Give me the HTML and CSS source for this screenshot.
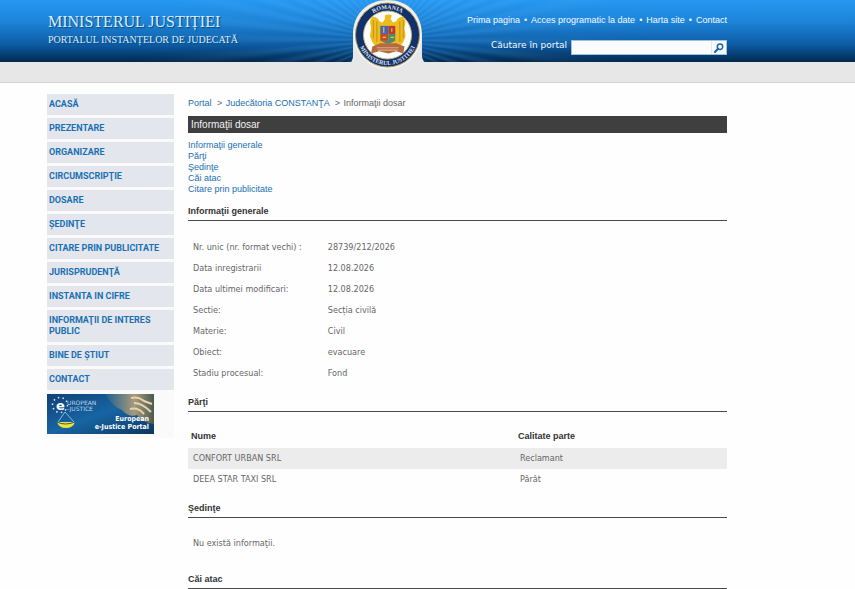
FILE: index.html
```html
<!DOCTYPE html>
<html lang="ro">
<head>
  <meta charset="UTF-8">
  <title>Informaţii dosar</title>
  <link rel="stylesheet" href="styles.css">
</head>
<body>
<header class="header">
  <div class="banner">
    <div class="wrap banner-inner">
      <div class="brand">
        <p class="brand-name">MINISTERUL JUSTIȚIEI</p>
        <p class="brand-sub">PORTALUL INSTANȚELOR DE JUDECATĂ</p>
      </div>
      <div class="tools">
        <nav class="top-links">
          <a href="#">Prima pagina</a><span>•</span><a href="#">Acces programatic la date</a><span>•</span><a href="#">Harta site</a><span>•</span><a href="#">Contact</a>
        </nav>
        <form class="search">
          <label for="search">Căutare în portal</label>
          <div class="search-box">
            <input type="text" id="search">
            <button type="button" aria-label="Caută">
              <svg width="10" height="10" viewBox="0 0 10 10"><circle cx="6" cy="3.7" r="2.7" fill="#fff" stroke="#1b66a8" stroke-width="1.5"/><path d="M4 5.8L1 9" stroke="#1b66a8" stroke-width="2" stroke-linecap="round"/></svg>
            </button>
          </div>
        </form>
      </div>
      <svg class="emblem" width="78" height="72" viewBox="0 0 78 72">
        <path d="M0 64Q4 61 4 56V35C4 13 19 0 38.500 0S73 13 73 35V56Q73 61 78 64V72H0Z" fill="#e7e7e7"/>
        <circle cx="38.500" cy="35" r="34" fill="#f4f4f0"/>
        <circle cx="38.500" cy="35" r="32" fill="#12306b" stroke="#a89a55" stroke-width="1"/>
        <circle cx="38.500" cy="35" r="24" fill="#fdfdfb" stroke="#c5b778" stroke-width="1"/>
        <!-- vultur -->
        <g transform="translate(-5.500 -4) scale(1.150)">
          <path d="M36 17q3-2 6 0l-1 3 2 3 3-1q1-4 6-4l2 4-1 6 1 7-2 5-3 4-4 1-6 4-7-4-4-1-3-4-2-5 1-7-1-6 2-4q5 0 6 4l3 1 2-3z" fill="#edbd1f"/>
          <path d="M26 21v16M29 22v18M49 22v18M52 21v16" stroke="#c99717" stroke-width="1"/>
          <path d="M32 26h7v7h-7z" fill="#4467ac"/>
          <path d="M39 26h6v7h-6z" fill="#b93a35"/>
          <path d="M32 33h7v6h-7z" fill="#c5482d"/>
          <path d="M39 33h6v6l-6 3-7-3h7z" fill="#4c8b6b"/>
          <path d="M35 27v5M42 28v3M34 36h3M41 36h3" stroke="#e8c643" stroke-width="1"/>
          <path d="M25 44l7-3h14l7 3-1 6-6-2-7 2-8-2-7 2z" fill="#b66a43"/>
          <path d="M29 45l19 0M30 47h17" stroke="#e0a77f" stroke-width="1"/>
        </g>
        <path id="arcTop" d="M12.500 35a26 26 0 0 1 52 0" fill="none"/>
        <path id="arcBottom" d="M8.500 35a30 30 0 0 0 60 0" fill="none"/>
        <text class="emblem-text"><textPath href="#arcTop" startOffset="50%" text-anchor="middle">ROMANIA</textPath></text>
        <text class="emblem-text"><textPath href="#arcBottom" startOffset="50%" text-anchor="middle">MINISTERUL JUSTITIEI</textPath></text>
      </svg>
    </div>
  </div>
  <div class="strip"></div>
</header>

<div class="wrap page">
  <aside class="sidebar">
    <ul class="menu">
      <li><a href="#">ACASĂ</a></li>
      <li><a href="#">PREZENTARE</a></li>
      <li><a href="#">ORGANIZARE</a></li>
      <li><a href="#">CIRCUMSCRIPŢIE</a></li>
      <li><a href="#">DOSARE</a></li>
      <li><a href="#">ŞEDINŢE</a></li>
      <li><a href="#">CITARE PRIN PUBLICITATE</a></li>
      <li><a href="#">JURISPRUDENŢĂ</a></li>
      <li><a href="#">INSTANTA IN CIFRE</a></li>
      <li><a href="#">INFORMAŢII DE INTERES PUBLIC</a></li>
      <li><a href="#">BINE DE ŞTIUT</a></li>
      <li><a href="#">CONTACT</a></li>
    </ul>
    <a class="ejustice" href="#">
      <svg width="107" height="40" viewBox="0 0 107 40">
        <defs>
          <linearGradient id="blue" x1="0" y1="0" x2="1" y2="1">
            <stop offset="0" stop-color="#123f75"/>
            <stop offset="0.500" stop-color="#1765a3"/>
            <stop offset="1" stop-color="#0b3662"/>
          </linearGradient>
          <linearGradient id="statue" x1="0" y1="0" x2="1" y2="0">
            <stop offset="0" stop-color="#1c5f8f"/>
            <stop offset="0.600" stop-color="#a79a7c"/>
            <stop offset="1" stop-color="#4a5a4c"/>
          </linearGradient>
        </defs>
        <path d="M0 0h107v40H0z" fill="url(#blue)"/>
        <path d="M58 0h49v30q-11-1-17-9-8 3-15-5-9-3-17-16z" fill="url(#statue)"/>
        <path d="M84 4q7-2 13 3l8 3M87 9q8 0 17 9M83 15q8-2 14 5" stroke="#e3d3ae" stroke-width="2" fill="none"/>
        <path d="M18 18L11 28M18 18l9 10" stroke="#87bddb" stroke-width="1"/>
        <path d="M10 28h18q-2 6-9 6t-9-6z" fill="#f1df43"/>
        <path d="M10 28q8 4 18 0" stroke="#2c5f57" stroke-width="1" fill="none"/>
        <circle cx="13" cy="11" r="7.500" fill="none" stroke="#d7e9f5" stroke-width="1.500" stroke-dasharray="1.500 3.200"/>
        <text x="9" y="16" class="ej-e">e</text>
        <text x="20" y="11" class="ej-small">UROPEAN</text>
        <text x="20" y="17" class="ej-small">-JUSTICE</text>
        <text x="102" y="27" class="ej-title" text-anchor="end">European</text>
        <text x="102" y="35" class="ej-title" text-anchor="end">e-Justice Portal</text>
      </svg>
    </a>
  </aside>

  <main class="content">
    <nav class="breadcrumb">
      <a href="#">Portal</a> <span>&gt;</span> <a href="#">Judecătoria CONSTANŢA</a> <span>&gt;</span> Informaţii dosar
    </nav>
    <h1 class="title">Informaţii dosar</h1>
    <ul class="anchors">
      <li><a href="#generale">Informaţii generale</a></li>
      <li><a href="#parti">Părţi</a></li>
      <li><a href="#sedinte">Şedinţe</a></li>
      <li><a href="#cai">Căi atac</a></li>
      <li><a href="#citare">Citare prin publicitate</a></li>
    </ul>

    <h2 class="section" id="generale">Informaţii generale</h2>
    <table class="info">
      <tr><th scope="row">Nr. unic (nr. format vechi) :</th><td>28739/212/2026</td></tr>
      <tr><th scope="row">Data inregistrarii</th><td>12.08.2026</td></tr>
      <tr><th scope="row">Data ultimei modificari:</th><td>12.08.2026</td></tr>
      <tr><th scope="row">Sectie:</th><td>Secția civilă</td></tr>
      <tr><th scope="row">Materie:</th><td>Civil</td></tr>
      <tr><th scope="row">Obiect:</th><td>evacuare</td></tr>
      <tr><th scope="row">Stadiu procesual:</th><td>Fond</td></tr>
    </table>

    <h2 class="section" id="parti">Părţi</h2>
    <table class="parties">
      <thead>
        <tr><th scope="col">Nume</th><th scope="col">Calitate parte</th></tr>
      </thead>
      <tbody>
        <tr><td>CONFORT URBAN SRL</td><td>Reclamant</td></tr>
        <tr><td>DEEA STAR TAXI SRL</td><td>Pârât</td></tr>
      </tbody>
    </table>

    <h2 class="section" id="sedinte">Şedinţe</h2>
    <p class="empty">Nu există informaţii.</p>

    <h2 class="section" id="cai">Căi atac</h2>
  </main>
</div>
</body>
</html>
```
FILE: styles.css
```css
* {
  box-sizing: border-box;
  margin: 0;
  padding: 0;
}

body {
  background-color: #fefefe;
  font-family: "Liberation Sans", Arial, sans-serif;
  font-size: 9px;
  line-height: 11px;
  color: #666;
}

a {
  color: #1b6fb3;
  text-decoration: none;
}

ul {
  list-style: none;
}

table {
  width: 100%;
  border-collapse: collapse;
  table-layout: fixed;
  font-family: "DejaVu Sans Condensed", "DejaVu Sans", Tahoma, sans-serif;
}

th,
td {
  height: 21px;
  padding: 0 5px;
  text-align: left;
  font-weight: normal;
}

.wrap {
  margin: 0 128px 0 47px;
}

/* header */
.banner {
  position: relative;
  height: 62px;
  background: linear-gradient(#2698f2 0, #1d84d8 35%, #0d5ca4 72%, #03325f 95%, #042747 100%);
}

/* raze in jurul stemei */
.banner::before {
  content: "";
  position: absolute;
  inset: 0;
  background: repeating-conic-gradient(from 0deg at 388px 40px, rgba(120, 200, 255, 0.14) 0 1deg, transparent 3deg 4deg, rgba(120, 200, 255, 0.14) 6deg);
  -webkit-mask-image: radial-gradient(circle at 388px 40px, #000 60px, transparent 260px);
  mask-image: radial-gradient(circle at 388px 40px, #000 60px, transparent 260px);
}

.banner-inner {
  position: relative;
  display: flex;
  justify-content: space-between;
}

.brand {
  padding: 13px 0 0 1px;
  font-family: "Liberation Serif", "Times New Roman", serif;
  color: #d9eefc;
  text-shadow: 1px 1px 1px #0a437c;
}

.brand-name {
  font-size: 16px;
  line-height: 18px;
}

.brand-sub {
  font-size: 10px;
  line-height: 18px;
}

.tools {
  display: flex;
  flex-direction: column;
  align-items: flex-end;
  gap: 14px;
  padding-top: 15px;
  color: #f4faff;
}

.top-links {
  display: flex;
  gap: 4px;
}

.top-links a {
  color: #f4faff;
}

.search {
  display: flex;
  gap: 4px;
  font-family: "DejaVu Sans", Verdana, sans-serif;
}

.search-box {
  display: flex;
  width: 156px;
  height: 15px;
  border: 1px solid #9fc3df;
  background-color: #fafcfe;
}

.search-box input {
  flex: 1;
  min-width: 0;
  border: 0;
  background: none;
  font-size: 9px;
}

.search-box button {
  display: flex;
  align-items: center;
  justify-content: center;
  width: 15px;
  border: 0;
  border-left: 1px solid #e3e8ec;
  background: none;
}

.emblem {
  position: absolute;
  top: 0;
  left: 50%;
  margin-left: -38px;
}

.emblem-text {
  font-family: "Liberation Serif", serif;
  font-size: 6px;
  font-weight: bold;
  fill: #e2e4ea;
}

.strip {
  height: 21px;
  background-color: #e7e7e7;
  border-bottom: 1px solid #d3d3d3;
}

/* page */
.page {
  display: flex;
  gap: 14px;
  padding-top: 11px;
}

.sidebar {
  flex: none;
  align-self: flex-start;
  width: 127px;
  padding-bottom: 4px;
  background-color: #fafafa;
}

.menu {
  display: flex;
  flex-direction: column;
  gap: 3px;
  margin-bottom: 4px;
}

.menu a {
  display: block;
  padding: 5px 2px;
  background-color: #e3e7ed;
  font-family: Roboto, Arial, sans-serif;
  font-weight: bold;
}

.ejustice,
.ejustice svg {
  display: block;
}

.ej-e {
  font: bold 13px "DejaVu Sans", sans-serif;
  fill: #fff;
}

.ej-small {
  font: 6px "DejaVu Sans", sans-serif;
  fill: #b9d9ee;
}

.ej-title {
  font: bold 7px "DejaVu Sans Condensed", "DejaVu Sans", sans-serif;
  fill: #fff;
}

.content {
  flex: 1;
  min-width: 0;
  padding-top: 4px;
}

.breadcrumb span {
  margin: 0 1px 0 3px;
}

.title {
  margin: 7px 0;
  padding: 0 3px;
  background-color: #403f40;
  font-size: 10px;
  font-weight: normal;
  line-height: 17px;
  color: #f2f2f2;
}

.section {
  padding-bottom: 3px;
  border-bottom: 1px solid #4a4a4a;
  font-size: 9px;
  line-height: 11px;
  color: #333;
}

.anchors {
  margin-bottom: 11px;
}

.info {
  margin: 16px 0 13px;
}

.info th {
  width: 25%;
}

.parties {
  margin: 13px 0;
}

.parties th {
  height: 23px;
  padding: 0 3px;
  font-family: "Liberation Sans", Arial, sans-serif;
  font-weight: bold;
  color: #333;
}

.parties th:last-child {
  width: 212px;
}

.parties tbody tr:nth-child(odd) {
  background-color: #ececec;
}

.empty {
  padding: 20px 5px 25px;
  font-family: "DejaVu Sans Condensed", "DejaVu Sans", Tahoma, sans-serif;
}
```
